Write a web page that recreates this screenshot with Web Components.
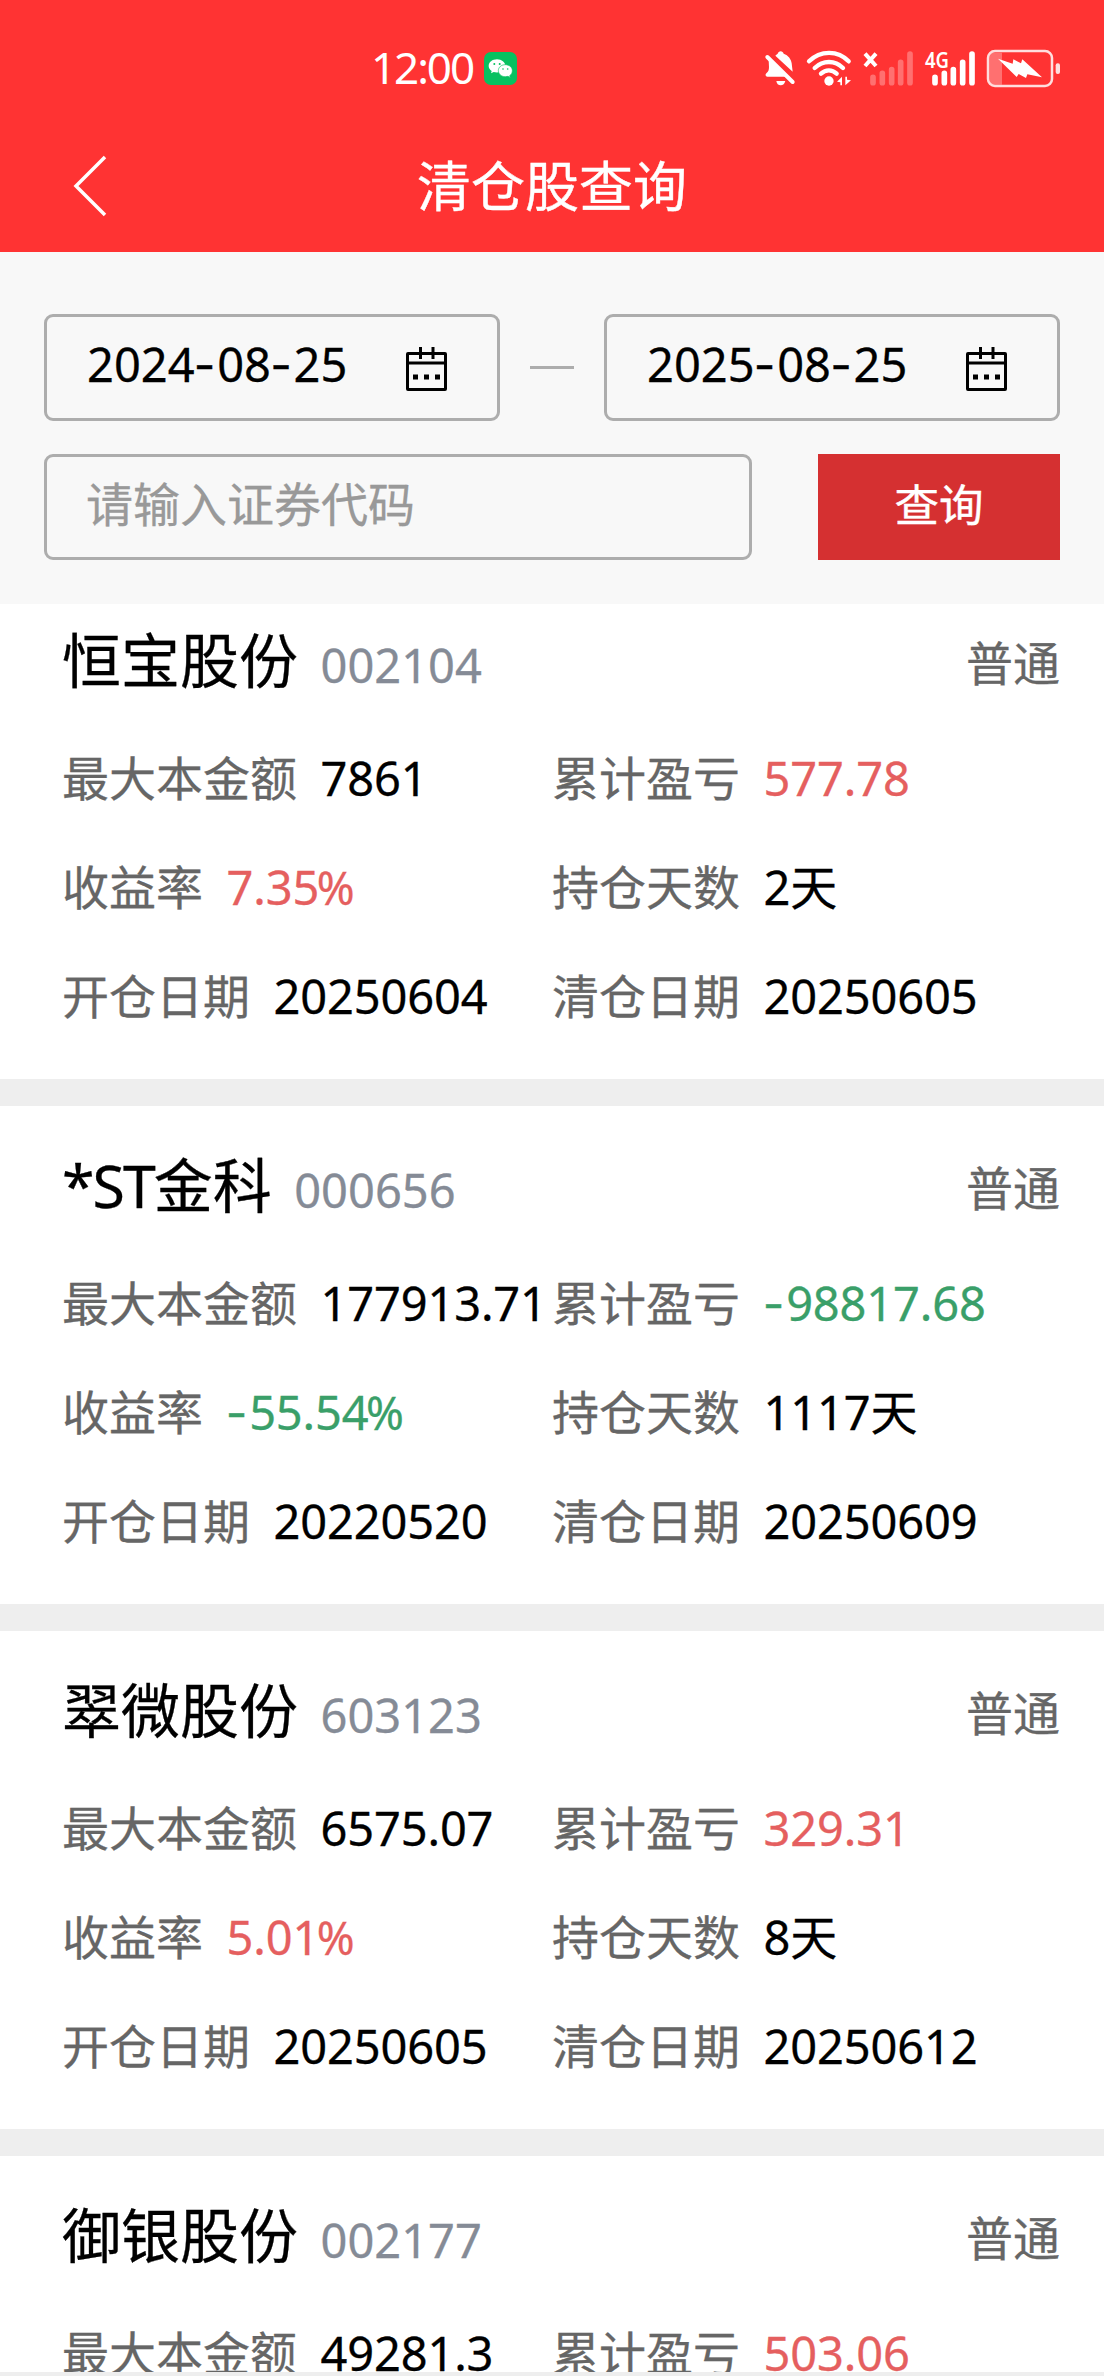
<!DOCTYPE html>
<html lang="zh-CN">
<head>
<meta charset="utf-8">
<title>清仓股查询</title>
<style>
  html, body { margin: 0; padding: 0; height: 100%; overflow: hidden; background: #fff; }
  body {
    --cjk: "Noto Sans CJK SC", sans-serif;
    --num: "Noto Sans", "Noto Sans CJK SC", sans-serif;
    font-family: var(--cjk);
  }
</style>
</head>
<body>
<stock-app></stock-app>
<script>
const define = (name, html, init) => {
  const tpl = document.createElement('template');
  tpl.innerHTML = html;
  customElements.define(name, class extends HTMLElement {
    connectedCallback() {
      if (this.shadowRoot) return;
      const root = this.attachShadow({ mode: 'open' });
      root.appendChild(tpl.content.cloneNode(true));
      if (init) init(this, root);
    }
  });
};

// Figures use a wide hyphen and a compact percent sign.
const figureStyle = `.h { font-family: Inter; letter-spacing: 1.800px; margin-left: -.800px; } .p { font-size: .97em; letter-spacing: 0; margin-left: -2.500px; }`;
const setFigure = (node, value) => {
  for (const part of value.split(/([-%])/)) {
    if (part === '-' || part === '%') {
      const s = document.createElement('span');
      s.className = part === '-' ? 'h' : 'p';
      s.textContent = part;
      node.append(s);
    } else if (part) {
      node.append(part);
    }
  }
};

define('status-bar', `
<style>
  :host { display: flex; box-sizing: border-box; height: 114px; padding: 22px 43px 0 371px; align-items: center; color: #fff; }
  .time { font: 400 44px/44px var(--num); letter-spacing: -2.100px; width: 113px; margin-top: -3px; white-space: nowrap; }
  .icons { display: flex; gap: 10px; margin-left: auto; }
  svg { display: block; flex: none; overflow: visible; }
</style>
<span class="time">12:00</span>
<svg width="33" height="33" viewBox="0 0 99 99">
  <rect width="99" height="99" rx="21" fill="#07c160"/>
  <path fill="#fff" d="M39 22c-14 0-25 8.500-25 20 0 6.500 3.500 11.500 9 15l-2 7 8-4c3 .8 6 1.200 10 1.200 14 0 25-8.500 25-19.200S53 22 39 22z"/>
  <path fill="#fff" stroke="#07c160" stroke-width="2" d="M64 38c-12 0-21 8-21 18s9 18 21 18c3 0 5-.4 8-1l7 4-2-6c5-3 8-9 8-15 0-10-9-18-21-18z"/>
  <g fill="#07c160"><circle cx="31" cy="36" r="3"/><circle cx="47" cy="36" r="3"/><circle cx="57" cy="51" r="2.500"/><circle cx="71" cy="51" r="2.500"/></g>
</svg>
<div class="icons">
  <svg width="32" height="39" viewBox="42 39 96 117" fill="#fff">
    <path d="M92 46c4 0 8 3 9 7 14 5 22 16 24 29l3 25-52-48c2-2 4-4 7-6 1-4 5-7 9-7z"/>
    <path d="M56 72L108 122H52c-6 0-7-7-3-10 6-5 8-10 8-19z"/>
    <path d="M52 63L128 138" stroke="#fff" stroke-width="12" stroke-linecap="round"/>
    <path d="M79 135h27c-2 8-7 13-14 13s-12-5-13-13z"/>
  </svg>
  <svg width="46" height="39" viewBox="168 39 138 117" fill="none" stroke="#fff" stroke-width="13" stroke-linecap="round">
    <path d="M177 76c34-34 87-34 119 0M194 96c25-24 61-24 85 0M213 113c14-13 33-13 47 0"/>
    <circle cx="237" cy="135" r="14" fill="#fff" stroke="none"/>
    <path d="M261 137l15-15v26h-5v-9zM303 133l-17 15v-26h5v9z" fill="#fff" stroke="none"/>
  </svg>
  <svg width="52" height="39" viewBox="336 39 156 117" fill="none" stroke="#fff" stroke-linecap="round">
    <path d="M345 53l33 37M378 53l-33 37" stroke-width="12" stroke-linecap="butt"/>
    <path d="M369 124v16M397 112v28M425 101v39M452 79v61M480 54v86" stroke-width="17" opacity=".3"/>
  </svg>
  <svg width="52" height="39" viewBox="522 39 156 117" fill="none" stroke="#fff" stroke-linecap="round">
    <text x="525" y="97" font-family="Noto Sans" font-size="66" font-weight="600" fill="#fff" stroke="none" textLength="72" lengthAdjust="spacingAndGlyphs">4G</text>
    <path d="M555 124v16M583 112v28M610 101v39M638 79v61M666 54v86" stroke-width="17"/>
  </svg>
  <svg width="75" height="39" viewBox="708 39 225 117">
    <path d="M732 50h24v96h-24q-14 0-14-14V64q0-14 14-14z" fill="#fff" opacity=".3"/>
    <rect x="714" y="45" width="192" height="105" rx="21" fill="none" stroke="#ffdede" stroke-width="7.500"/>
    <rect x="917" y="82" width="13" height="32" rx="6" fill="#ffdede"/>
    <path d="M744 68L788 83 790 70 813 82 817 70 876 124 832 115 828 126 806 114 800 123z" fill="#fff"/>
  </svg>
</div>`);

define('nav-bar', `
<style>
  :host { display: grid; grid-template-columns: 1fr auto 1fr; align-items: center; height: 138px; color: #fff; }
  svg { display: block; margin: 6px 0 0 72px; }
  h1 { margin: 2px 0 0; font: 400 54px/54px var(--cjk); white-space: nowrap; -webkit-text-stroke: .4px #fff; }
</style>
<svg width="36" height="62" viewBox="0 0 36 62" fill="none" stroke="#fff" stroke-width="3.500"><path d="M33 2L4 31l29 29"/></svg>
<h1><slot></slot></h1>`);

define('date-field', `
<style>
  :host { display: flex; box-sizing: border-box; width: 456px; height: 107px; border: 3px solid #adadad; border-radius: 9px; padding: 0 50px 0 40px; align-items: center; justify-content: space-between; }
  .d { font: 400 47px/47px var(--num); padding-bottom: 6px; white-space: nowrap; color: #000; -webkit-text-stroke: .3px; }
  ${figureStyle}
  svg { display: block; margin-top: 3px; }
</style>
<span class="d"></span>
<svg width="41" height="44" viewBox="0 0 41 44" fill="none" stroke="#000" stroke-width="3">
  <rect x="1.500" y="6.500" width="38" height="36" rx=".5"/>
  <path d="M1 16h39M14.500 0v12M27 0v12"/>
  <path d="M7 30h5M18 30h5M29 30h5" stroke-width="5"/>
</svg>`, (el, root) => setFigure(root.querySelector('.d'), el.getAttribute('value')));

define('code-input', `
<style>
  :host { display: flex; box-sizing: border-box; width: 708px; height: 106px; border: 3px solid #adadad; border-radius: 9px; padding: 0 39px 11px; align-items: center; font: 400 47px/47px var(--cjk); color: #999; -webkit-text-stroke: .3px; }
</style>
<slot></slot>`);

define('query-button', `
<style>
  :host { display: flex; box-sizing: border-box; width: 242px; height: 106px; padding-bottom: 9px; align-items: center; justify-content: center; background: #d53031; color: #fff; font: 400 44.5px/45px var(--cjk); -webkit-text-stroke: .4px; }
</style>
<slot></slot>`);

define('filter-panel', `
<style>
  :host { display: flex; flex-direction: column; box-sizing: border-box; gap: 33px; height: 352px; padding: 62px 44px 44px; background: #f8f8f8; position: relative; }
  div { display: flex; justify-content: space-between; align-items: center; }
  i { width: 44px; height: 3px; background: #adadad; }
</style>
<div><date-field value="2024-08-25"></date-field><i></i><date-field value="2025-08-25"></date-field></div>
<div><code-input>请输入证券代码</code-input><query-button>查询</query-button></div>`);

define('data-pair', `
<style>
  :host { display: flex; align-items: baseline; gap: 23.500px; white-space: nowrap; height: 109px; -webkit-text-stroke: .3px; }
  .k { font: 400 47px/109px var(--cjk); color: #666; }
  .v { font: 400 47px/47px var(--num); letter-spacing: -.150px; color: #000; }
  ${figureStyle}
  :host([tone=up]) .v { color: #e55f5f; }
  :host([tone=down]) .v { color: #3a9f69; }
</style>
<span class="k"></span><span class="v"></span>`, (el, root) => {
  root.querySelector('.k').textContent = el.getAttribute('label');
  setFigure(root.querySelector('.v'), el.getAttribute('value'));
});

define('stock-card', `
<style>
  :host { display: block; box-sizing: border-box; height: 525px; flex: none; background: #fff; border-bottom: 27px solid #eee; -webkit-text-stroke: .3px; }
  header { display: flex; justify-content: space-between; height: 140px; box-sizing: border-box; padding: 13px 44px 0 62px; }
  .id { display: flex; align-items: baseline; gap: 22.500px; }
  .name { font: 400 59px/128px var(--cjk); color: #000; white-space: nowrap; }
  .name .latin { font-family: "Noto Sans"; line-height: 59px; letter-spacing: -2px; }
  .code { font: 400 47px/47px var(--num); color: #858b96; }
  .kind { font: 400 47px/128px var(--cjk); color: #666; padding-top: 3px; }
  .grid { display: grid; grid-template-columns: 490px 1fr; padding-left: 62px; }
</style>
<header><div class="id"><span class="name"></span><span class="code"></span></div><span class="kind">普通</span></header>
<div class="grid"><slot></slot></div>`, (el, root) => {
  const name = root.querySelector('.name');
  const [, latin, rest] = el.getAttribute('name').match(/^([*A-Z]*)(.*)$/);
  if (latin) {
    const s = document.createElement('span');
    s.className = 'latin';
    s.textContent = latin;
    name.append(s);
  }
  name.append(rest);
  root.querySelector('.code').textContent = el.getAttribute('code');
});

const stocks = [
  ['恒宝股份', '002104', '7861', '577.78', '7.35%', '2天', '20250604', '20250605'],
  ['*ST金科', '000656', '177913.71', '-98817.68', '-55.54%', '1117天', '20220520', '20250609'],
  ['翠微股份', '603123', '6575.07', '329.31', '5.01%', '8天', '20250605', '20250612'],
  ['御银股份', '002177', '49281.3', '503.06', '', '', '', '']
];

define('stock-list', `
<style>
  :host { display: flex; flex-direction: column; flex: 1; min-height: 0; overflow: hidden; border-bottom: 4px solid #eee; }
  stock-card:first-of-type { margin-top: -23px; }
</style>`, (el, root) => {
  for (const [name, code, max, pl, rate, days, open, close] of stocks) {
    const tone = pl[0] === '-' ? 'down' : 'up';
    const card = document.createElement('stock-card');
    card.setAttribute('name', name);
    card.setAttribute('code', code);
    const pairs = [['最大本金额', max], ['累计盈亏', pl, tone], ['收益率', rate, tone], ['持仓天数', days], ['开仓日期', open], ['清仓日期', close]];
    for (const [label, value, t] of pairs) {
      if (!value) continue;
      const p = document.createElement('data-pair');
      p.setAttribute('label', label);
      p.setAttribute('value', value);
      if (t) p.setAttribute('tone', t);
      card.append(p);
    }
    root.append(card);
  }
});

define('stock-app', `
<style>
  :host { display: flex; flex-direction: column; width: 1104px; height: 2376px; overflow: hidden; background: #fff; }
  .top { background: #ff3333; height: 252px; flex: none; position: relative; z-index: 1; }
  filter-panel { flex: none; z-index: 1; }
</style>
<div class="top"><status-bar></status-bar><nav-bar>清仓股查询</nav-bar></div>
<filter-panel></filter-panel>
<stock-list></stock-list>`);
</script>
</body>
</html>
